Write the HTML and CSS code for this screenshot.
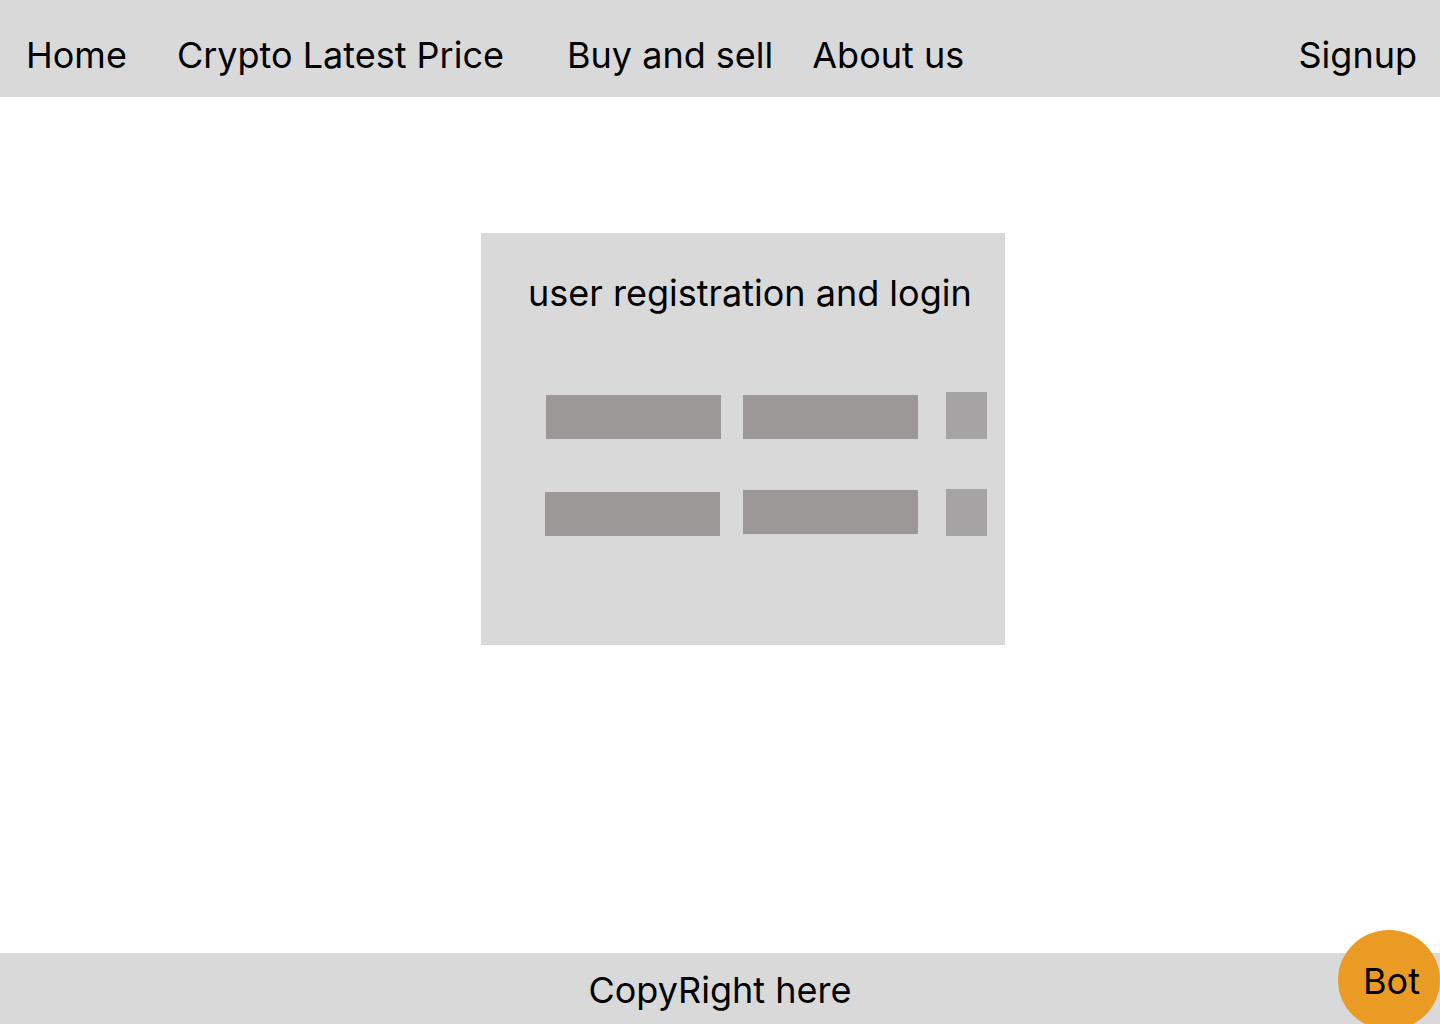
FILE: index.html
```html
<!DOCTYPE html>
<html lang="en">
<head>
<meta charset="utf-8">
<title>Crypto</title>
<link rel="stylesheet" href="styles.css">
</head>
<body>
<div class="page">
  <header class="topbar">
    <nav class="nav">
      <a class="nav-link home">Home</a>
      <a class="nav-link crypto">Crypto Latest Price</a>
      <a class="nav-link buy">Buy and sell</a>
      <a class="nav-link about">About us</a>
    </nav>
    <a class="nav-link signup">Signup</a>
  </header>
  <main class="main">
    <section class="card">
      <h1 class="card-title">user registration and login</h1>
      <div class="row row-1">
        <div class="field f1"></div>
        <div class="field f2"></div>
        <div class="btn"></div>
      </div>
      <div class="row row-2">
        <div class="field f1"></div>
        <div class="field f2"></div>
        <div class="btn"></div>
      </div>
    </section>
  </main>
  <footer class="footer">
    <span class="copy">CopyRight here</span>
  </footer>
  <div class="bot">Bot</div>
</div>
</body>
</html>
```
FILE: styles.css
```css
* { box-sizing: border-box; }
html, body { margin: 0; padding: 0; }
body {
  font-family: Inter, "Noto Sans", sans-serif;
  color: #000;
  background: #fff;
}
.page {
  position: relative;
  height: 1024px;
  display: flex;
  flex-direction: column;
  overflow: hidden;
}
.topbar {
  height: 97px;
  flex: none;
  background: #d9d9d9;
  display: flex;
  align-items: center;
  justify-content: space-between;
  padding: 0 23px 0 26px;
}
.nav { display: flex; align-items: center; }
.nav-link {
  font-size: 36px;
  line-height: 44px;
  color: #000;
  text-decoration: none;
  padding-top: 12px;
}
.crypto { margin-left: 50px; }
.buy { margin-left: 63px; }
.about { margin-left: 39px; }

.main {
  flex: 1;
  padding: 136px 0 0 481px;
}
.card {
  width: 524px;
  height: 412px;
  background: #d9d9d9;
  padding: 38px 18px 0 47px;
}
.card-title {
  margin: 0;
  font-weight: 400;
  font-size: 36px;
  line-height: 44px;
}
.row {
  display: flex;
  align-items: flex-end;
  margin-left: 18px;
}
.row-1 { margin-top: 77px; }
.row-2 { margin-top: 50px; }
.field {
  width: 175px;
  height: 44px;
  background: #9c9897;
}
.f2 { margin-left: 22px; }
.btn {
  width: 41px;
  height: 47px;
  background: #a5a3a3;
  margin-left: 28px;
}
.row-2 .f1 { margin-left: -1px; margin-right: 1px; }
.row-2 .f2 { margin-bottom: 2px; }

.footer {
  height: 71px;
  flex: none;
  background: #d9d9d9;
  display: flex;
  align-items: center;
  justify-content: center;
}
.copy {
  font-size: 36px;
  line-height: 44px;
  padding-top: 2px;
}
.bot {
  position: absolute;
  left: 1338px;
  top: 930px;
  width: 102px;
  height: 100px;
  border-radius: 50%;
  background: #ea9b23;
  font-size: 36px;
  line-height: 44px;
  display: flex;
  align-items: center;
  justify-content: center;
  padding-top: 1px;
  padding-left: 5px;
}
```
